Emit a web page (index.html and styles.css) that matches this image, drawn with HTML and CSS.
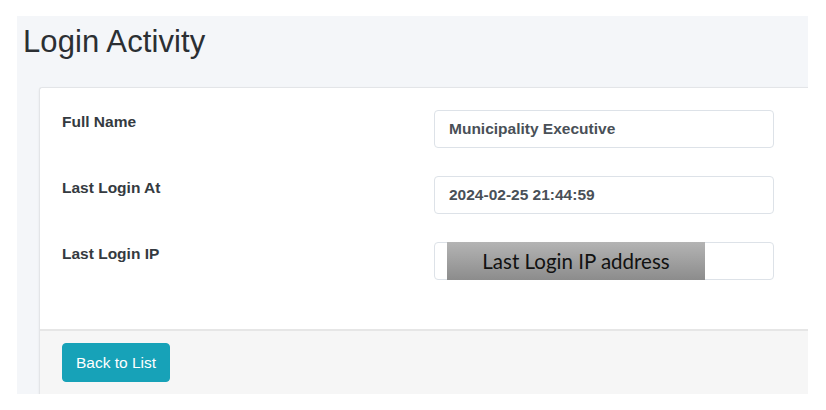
FILE: index.html
```html
<!DOCTYPE html>
<html>
<head>
<meta charset="utf-8">
<link rel="stylesheet" href="styles.css">
</head>
<body>
<div class="frame">
  <h1 class="title">Login Activity</h1>
  <div class="card">
    <div class="card-body">
      <div class="form-grid">
        <label class="label">Full Name</label>
        <div class="field">Municipality Executive</div>
        <label class="label">Last Login At</label>
        <div class="field">2024-02-25 21:44:59</div>
        <label class="label">Last Login IP</label>
        <div class="field field-redacted"><span class="redact">Last Login IP address</span></div>
      </div>
    </div>
    <div class="card-footer">
      <a class="btn-info">Back to List</a>
    </div>
  </div>
</div>
</body>
</html>
```

FILE: styles.css
```css
html, body {
  margin: 0;
  padding: 0;
  background: #ffffff;
}
body {
  font-family: "Liberation Sans", Arial, sans-serif;
  color: #212529;
}
.frame {
  margin: 16px 18px 16px 17px;
  height: 378px;
  background: #f4f6f9;
  overflow: hidden;
  padding-left: 0;
}
.title {
  margin: 7px 0 0 6px;
  font-size: 31px;
  font-weight: 400;
  line-height: 37px;
  color: #2b2f33;
  letter-spacing: 0.1px;
}
.card {
  margin: 27px 0 0 22px;
  width: 800px;
  background: #ffffff;
  border: 1px solid #e3e5e8;
  border-right: none;
  border-radius: 3px 0 0 0;
  box-shadow: 0 1px 2px rgba(0,0,0,0.08);
}
.card-body {
  padding: 22px 22px 49px 22px;
}
.form-grid {
  display: grid;
  grid-template-columns: 372px 340px;
  grid-auto-rows: 38px;
  row-gap: 28px;
  align-items: start;
}
.label {
  font-size: 15.5px;
  font-weight: 700;
  line-height: 24px;
  color: #343a40;
}
.field {
  position: relative;
  box-sizing: border-box;
  height: 38px;
  border: 1px solid #dde2e8;
  border-radius: 4px;
  padding: 0 14px;
  display: flex;
  align-items: center;
  font-size: 15.5px;
  font-weight: 700;
  color: #495057;
}
.redact {
  position: absolute;
  left: 12px;
  top: -1px;
  bottom: -1px;
  width: 258px;
  background: linear-gradient(#b4b4b4, #8c8c8c);
  display: flex;
  align-items: center;
  justify-content: center;
  font-family: "Lato", "Open Sans", sans-serif;
  font-weight: 400;
  font-size: 20.5px;
  color: #111111;
}
.card-footer {
  border-top: 2px solid #e6e6e6;
  background: #f6f6f6;
  padding: 12px 22px 12px 22px;
  height: 39px;
}
.btn-info {
  display: inline-flex;
  align-items: center;
  box-sizing: border-box;
  height: 39px;
  padding: 0 13px;
  background: #17a2b8;
  border: 1px solid #17a2b8;
  border-radius: 4px;
  color: #ffffff;
  font-size: 15.5px;
}
```
